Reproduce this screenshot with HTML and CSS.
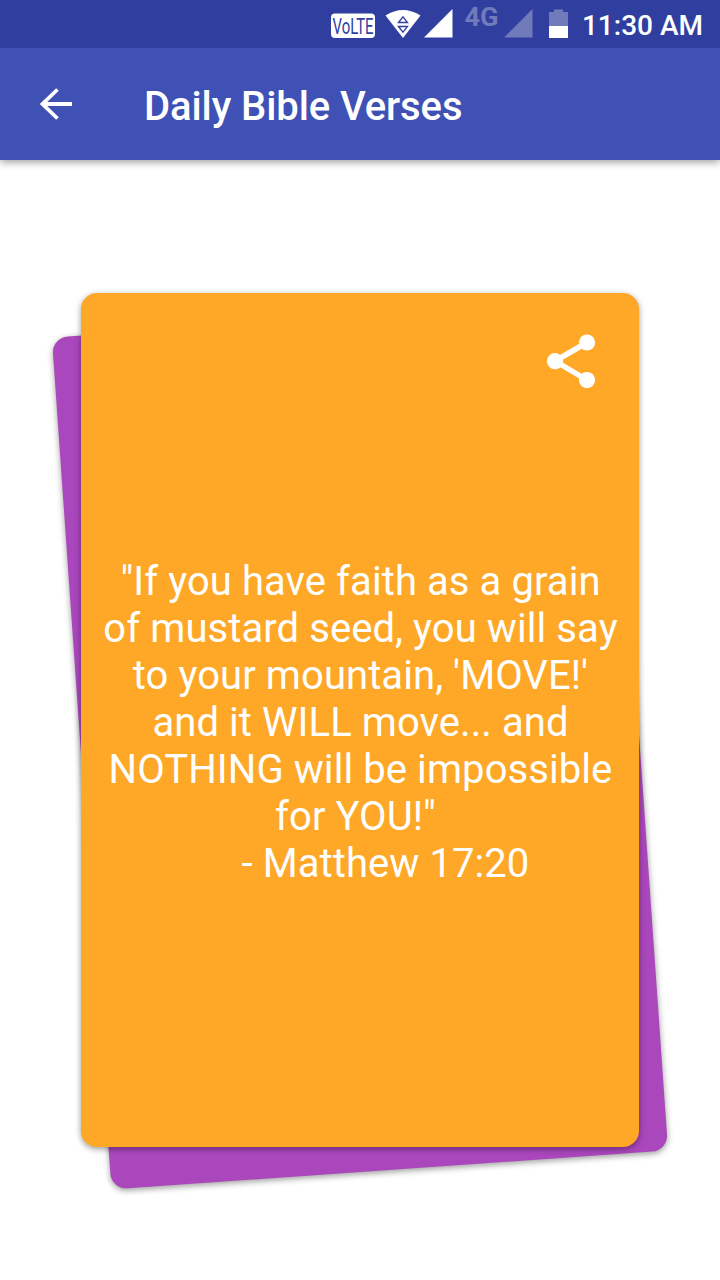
FILE: index.html
```
<!DOCTYPE html>
<html lang="en">
<head>
    <meta charset="UTF-8">
    <meta name="viewport" content="width=device-width, initial-scale=1.0">
    <title>Daily Bible Verses</title>
    <link rel="stylesheet" href="styles.css">
</head>
<body>
    <div class="status-bar">
        <svg class="status-icons" width="250" height="48" viewBox="0 0 250 48">
            <!-- volte -->
            <rect x="1" y="13.5" width="44" height="24.500" rx="4" fill="#fff"/>
            <text class="volte" x="2.500" y="34" textLength="41" lengthAdjust="spacingAndGlyphs">VoLTE</text>
            <!-- wifi -->
            <path d="M55.5 15.500Q73 4.500 90.500 15.500L73 38Z" fill="#fff"/>
            <path d="M68.500 22.500L73 16.800L77.500 22.500ZM68.500 26.500L73 32.200L77.500 26.500Z" fill="none" stroke="#303f9f" stroke-width="1.300"/>
            <!-- signal -->
            <path d="M94 37.500L122.500 9V37.500Z" fill="#fff"/>
            <text class="network" x="134.500" y="26" textLength="34" lengthAdjust="spacingAndGlyphs">4G</text>
            <path d="M174 37.500L202.500 9V37.500Z" fill="#717bbc"/>
            <!-- battery -->
            <path d="M219 12H224V9.500H233V12H238V26H219Z" fill="#717bbc"/>
            <path d="M219 26H238V38H219Z" fill="#fff"/>
        </svg>
        <span class="clock">11:30 AM</span>
    </div>

    <header class="toolbar">
        <svg class="back" width="32" height="32" viewBox="0 0 32 32">
            <path d="M17.500 1.500L2.500 16L17.500 30.500M2.500 16H32" fill="none" stroke="#fff" stroke-width="3.800"/>
        </svg>
        <h1>Daily Bible Verses</h1>
    </header>

    <main class="deck">
        <div class="card card-back"></div>
        <article class="card card-front">
            <svg class="share" width="50" height="54" viewBox="0 0 50 54">
                <path d="M41 8.500L9 27L41 46" fill="none" stroke="#fff" stroke-width="5.500"/>
                <circle cx="41" cy="8.500" r="8.100" fill="#fff"/>
                <circle cx="9" cy="27.200" r="8.100" fill="#fff"/>
                <circle cx="41" cy="46" r="8.100" fill="#fff"/>
            </svg>
            <p class="verse">"If you have faith as a grain
of mustard seed, you will say
to your mountain, 'MOVE!'
and it WILL move... and
NOTHING will be impossible
for YOU!"&nbsp;
&nbsp;&nbsp;&nbsp;&nbsp;&nbsp;- Matthew 17:20</p>
        </article>
    </main>
</body>
</html>
```
FILE: styles.css
```
* {
    box-sizing: border-box;
}

body {
    margin: 0;
    height: 1280px;
    background-color: #fff;
    color: #fff;
    font-family: Roboto, sans-serif;
    overflow: hidden;
}

/* sits above the toolbar so its shadow only falls downwards */
.status-bar {
    position: relative;
    z-index: 1;
    display: flex;
    justify-content: flex-end;
    height: 48px;
    padding-right: 17px;
    background-color: #303f9f;
}

.status-icons {
    margin-right: 2px;
}

.volte {
    font: 400 21.5px Roboto, sans-serif;
    fill: #303f9f;
}

.network {
    font: bold 25px Roboto, sans-serif;
    fill: #717bbc;
}

.clock {
    font-size: 28px;
    font-weight: 500;
    line-height: 52px;
}

.toolbar {
    display: flex;
    align-items: center;
    height: 112px;
    padding-left: 40px;
    background-color: #3f51b5;
    box-shadow: 0 2px 8px rgba(0, 0, 0, .4);
}

.toolbar h1 {
    margin: 4px 0 0 72px;
    font-size: 40px;
    font-weight: 500;
    letter-spacing: -.1px;
}

.deck {
    display: grid;
    justify-content: center;
    padding-top: 133px;
}

/* both cards share the same grid cell */
.card {
    grid-area: 1 / 1;
    width: 558px;
    height: 854px;
    border-radius: 16px;
    box-shadow: 0 2px 6px rgba(0, 0, 0, .4);
}

.card-back {
    background-color: #ab47bc;
    transform: translateY(24px) rotate(-4deg);
}

.card-front {
    display: flex;
    flex-direction: column;
    padding-top: 41px;
    background-color: #ffa726;
    z-index: 1;
}

.share {
    align-self: flex-end;
    margin-right: 43px;
}

.verse {
    margin: 170px 0 0 1px;
    font-size: 40px;
    line-height: 47px;
    letter-spacing: .08px;
    text-align: center;
    white-space: pre;
}
```
